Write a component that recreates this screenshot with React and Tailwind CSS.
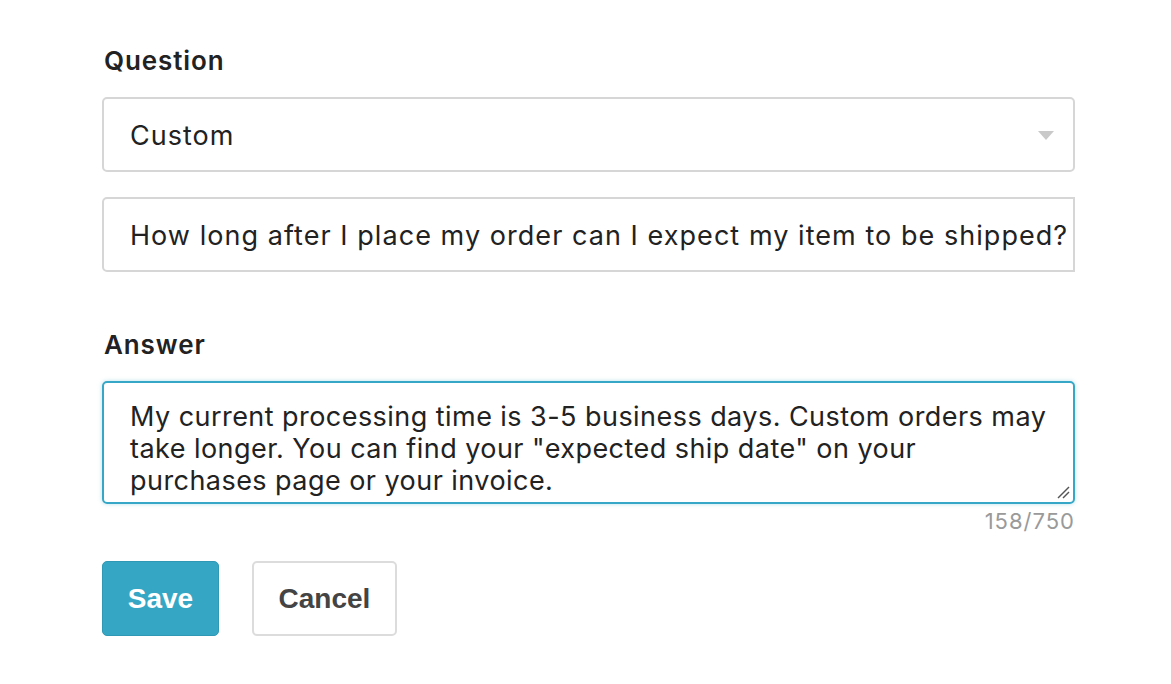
import React from "react";

const body = { fontFamily: "Inter, 'Open Sans', sans-serif" };
const heavy = { fontFamily: "'Liberation Sans', Arial, sans-serif" };

const App = () => {
  return (
    <div className="min-h-screen w-full bg-white pl-[102px] pt-[45px]" style={body}>
      <div className="w-[973px] flex flex-col">
        <label className="text-[26px] font-semibold text-[#222] leading-[32px] tracking-[0.9px] mb-[20px] pl-[2px]">
          Question
        </label>

        <div className="relative h-[75px] rounded-[5px] border-2 border-[#d6d6d6] flex items-center pl-[26px] pt-[3px]">
          <span className="text-[27px] text-[#222] tracking-[1px]">Custom</span>
          <svg
            className="absolute right-[19px] top-[32px]"
            width="16"
            height="9"
            viewBox="0 0 16 9"
          >
            <polygon points="0,0 16,0 8,9" fill="#c9c9c9" />
          </svg>
        </div>

        <div className="mt-[25px] h-[75px] rounded-l-[5px] border-2 border-[#d6d6d6] flex items-center pl-[26px] pr-[6px] pt-[3px] overflow-hidden">
          <span className="text-[27px] text-[#222] tracking-[1.05px] whitespace-nowrap">
            How long after I place my order can I expect my item to be shipped?
          </span>
        </div>

        <label className="mt-[57px] text-[26px] font-semibold text-[#222] leading-[32px] tracking-[0.9px] mb-[20px] pl-[2px]">
          Answer
        </label>

        <div className="relative h-[123px] rounded-[5px] border-2 border-[#36a7c6] shadow-[0_0_4px_rgba(54,167,198,0.35)] pt-[18px] pl-[26px] pr-[6px] overflow-hidden">
          <p className="text-[27px] leading-[32px] tracking-[0.45px] text-[#222] whitespace-nowrap">
            My current processing time is 3-5 business days. Custom orders may
            <br />
            take longer. You can find your "expected ship date" on your
            <br />
            purchases page or your invoice.
          </p>
          <svg
            className="absolute right-[3px] bottom-[3px]"
            width="14"
            height="14"
            viewBox="0 0 14 14"
          >
            <line x1="2" y1="13" x2="13" y2="2" stroke="#555" strokeWidth="1.5" />
            <line x1="7" y1="13" x2="13" y2="7" stroke="#555" strokeWidth="1.5" />
          </svg>
        </div>
        <div className="text-right text-[22px] leading-[30px] tracking-[1px] text-[#9a9a9a] mt-[2px]">158/750</div>

        <div className="flex gap-[33px] mt-[25px]">
          <button
            className="h-[75px] w-[117px] rounded-[5px] bg-[#35a7c5] border border-[#2f98b4] text-white text-[28px] font-bold"
            style={heavy}
          >
            Save
          </button>
          <button
            className="h-[75px] w-[145px] rounded-[5px] bg-white border-2 border-[#dcdcdc] text-[#444] text-[28px] font-bold"
            style={heavy}
          >
            Cancel
          </button>
        </div>
      </div>
    </div>
  );
};

export default App;
